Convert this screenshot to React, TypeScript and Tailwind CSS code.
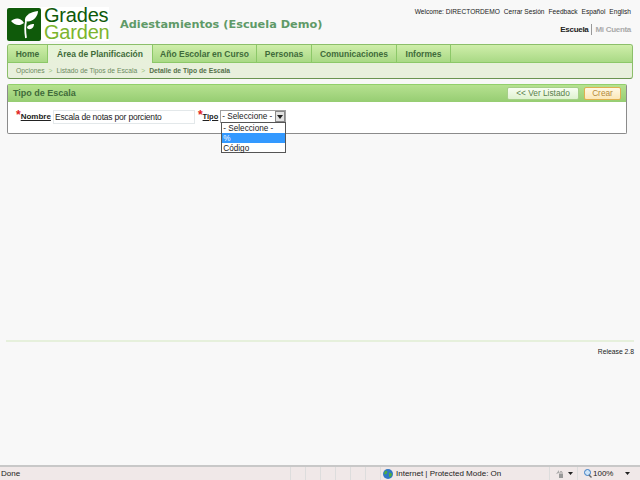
import { FunctionComponent } from "react";

const tabs = ["Home", "Área de Planificación", "Año Escolar en Curso", "Personas", "Comunicaciones", "Informes"];
const tabWidths = [40, 105, 104, 55, 85, 54];
const statusCells = [0, 1, 2, 3, 4, 5];

const Logo: FunctionComponent = () => (
	<div className="flex items-center w-[102px] h-[34px] bg-white">
		<div className="w-[34px] h-[33px] bg-[#0f5a0a] rounded-[2px] shrink-0">
			<svg viewBox="0 0 34 33" width="34" height="33">
				<path d="M19 30 C18 24 18 18 19 13" stroke="#fff" strokeWidth="1.8" fill="none" />
				<path d="M18 13 C17 8 23 4 31 3 C31 9 25 15 18 13Z" fill="#fff" />
				<path d="M17 15 C13 9 8 10 4 13 C8 18 13 18 17 15Z" fill="#fff" />
				<path d="M20 20 C20 17 24 16 27 16 C27 20 23 23 20 20Z" fill="#fff" />
			</svg>
		</div>
		<div className="ml-[3px] font-['Liberation_Sans',sans-serif] text-[20px] leading-[17px] tracking-[-0.2px]">
			<div className="text-[#0f5a0a]">Grades</div>
			<div className="text-[#7cb52e]">Garden</div>
		</div>
	</div>
);

const App: FunctionComponent = () => {
	return (
		<div className="w-[640px] h-[480px] flex flex-col bg-[#f8f8f8] overflow-hidden font-['Liberation_Sans',sans-serif]">
			<div className="h-[465px] flex flex-col shrink-0">
				{/* header */}
				<div className="h-[44px] flex shrink-0">
					<div className="pl-[7px] pt-[7px]">
						<Logo />
					</div>
					<div className="ml-[11px] pt-[17px] font-['DejaVu_Sans',sans-serif] font-bold text-[11.3px] leading-[16px] whitespace-nowrap text-[#5f9a68]">
						Adiestamientos (Escuela Demo)
					</div>
					<div className="ml-auto pr-[9px] flex flex-col items-end whitespace-nowrap">
						<div className="flex gap-[4px] pt-[7px] text-[6.6px] leading-[10px] text-[#222]">
							<span>Welcome: DIRECTORDEMO</span>
							<span>Cerrar Sesión</span>
							<span>Feedback</span>
							<span>Español</span>
							<span>English</span>
						</div>
						<div className="flex items-center pt-[7px] text-[8px] leading-[11px] font-bold tracking-[-0.3px]">
							<span className="text-[#222]">Escuela</span>
							<span className="mx-[3px] w-px h-[11px] bg-[#999]" />
							<span className="text-[#aaa]">Mi Cuenta</span>
						</div>
					</div>
				</div>

				{/* menu */}
				<div className="ml-[7px] mr-[7px] h-[35px] shrink-0 rounded-[3px] border border-[#8cbf6a] border-b-[#6a9450] bg-[#e8f0dc] overflow-hidden">
					<div className="h-[18px] flex bg-gradient-to-b from-[#cfeeaa] to-[#a9d985] border-b border-[#8cc868]">
						{tabs.map((tab, i) => (
							<div
								key={tab}
								style={{ width: tabWidths[i] }}
								className={
									i === 1
										? "shrink-0 -mb-px text-center text-[8.5px] leading-[18px] font-bold text-[#3f6b3a] bg-gradient-to-b from-[#e6f5d6] to-[#e8f0dc] border-r border-[#8cc868]"
										: "shrink-0 text-center text-[8.5px] leading-[18px] font-bold text-[#3f6b3a] border-r border-[#8cc868]"
								}
							>
								{tab}
							</div>
						))}
					</div>
					<div className="flex items-center h-[15px] pl-[8px] text-[6.75px] leading-[15px] text-[#6b8a5e] whitespace-nowrap">
						<span>Opciones</span>
						<span className="mx-[4px] text-[#9ac27e]">&gt;</span>
						<span>Listado de Tipos de Escala</span>
						<span className="mx-[4px] text-[#9ac27e]">&gt;</span>
						<span className="font-bold text-[#55704b]">Detalle de Tipo de Escala</span>
					</div>
				</div>

				{/* panel */}
				<div className="ml-[7px] mr-[13px] mt-[5px] h-[50px] shrink-0 rounded-[2px] border border-[#8b8b8b] border-t-[#92d06c] bg-white">
					<div className="h-[17px] flex items-center justify-between pl-[5px] pr-[5px] bg-gradient-to-b from-[#b6e190] to-[#96cd72]">
						<span className="text-[9px] font-bold text-[#3f6b3a]">Tipo de Escala</span>
						<div className="flex gap-[5px]">
							<button className="w-[72px] h-[13px] rounded-[2px] border border-[#a6cf88] bg-gradient-to-b from-[#f8fdf2] to-[#dff2cf] text-[8.3px] leading-[11px] text-[#5a7f4b]">
								&lt;&lt; Ver Listado
							</button>
							<button className="w-[37px] h-[13px] rounded-[2px] border border-[#e0b04e] bg-gradient-to-b from-[#fff8e4] to-[#fbe7b8] text-[8.3px] leading-[11px] text-[#b58a3a]">
								Crear
							</button>
						</div>
					</div>
					<div className="flex items-start pl-[8px] pt-[8px]">
						<span className="text-[12px] leading-[10px] font-bold text-[#e02020]">*</span>
						<span className="text-[8px] leading-[14px] font-bold underline text-[#222]">Nombre</span>
						<div className="ml-[2px] w-[142px] h-[14px] border border-[#e3e8ea] pl-[1px] text-[8.5px] leading-[12px] tracking-[-0.2px] text-[#222] whitespace-nowrap">
							Escala de notas por porciento
						</div>
						<span className="ml-[3px] text-[12px] leading-[10px] font-bold text-[#e02020]">*</span>
						<span className="text-[7.5px] leading-[14px] font-bold underline text-[#222]">Tipo</span>
						<div className="relative ml-[2px] w-[66px] h-[13px] border border-[#a0a0a0] flex items-center">
							<span className="pl-[1px] text-[8.2px] leading-[11px] text-[#222] whitespace-nowrap">- Seleccione -</span>
							<span className="absolute right-0 top-0 w-[10px] h-[11px] border border-[#888] bg-[#e2e2e2] flex items-center justify-center">
								<svg width="6" height="4" viewBox="0 0 6 4">
									<path d="M0 0H6L3 4Z" fill="#222" />
								</svg>
							</span>
							<div className="absolute left-[0px] top-[11px] z-10 w-[65px] h-[31px] border border-[#555] bg-white text-[8.2px] leading-[12px] text-[#222]">
								<div className="pl-[1px] h-[10px]">- Seleccione -</div>
								<div className="pl-[1px] h-[10px] bg-[#3399ff] text-white">%</div>
								<div className="pl-[1px] h-[10px]">Código</div>
							</div>
						</div>
					</div>
				</div>

				{/* footer */}
				<div className="ml-[6px] mr-[6px] mt-[206px] h-[2px] shrink-0 bg-[#e6f0dc]" />
				<div className="mr-[6px] mt-[5px] text-right text-[6.8px] leading-[10px] text-[#222]">Release 2.8</div>
			</div>

			{/* browser status bar */}
			<div className="h-[15px] shrink-0 flex items-center border-t-2 border-[#c8c8c8] bg-[#f0e8e8] text-[8px] text-[#222]">
				<span className="w-[290px] pl-[1px] shrink-0">Done</span>
				{statusCells.map((cell) => (
					<span key={cell} className="w-[15px] h-full shrink-0 border-l border-[#ddd]" />
				))}
				<div className="w-[169px] h-full shrink-0 flex items-center border-l border-[#ddd] pl-[2px]">
					<svg width="10" height="10" viewBox="0 0 10 10">
						<circle cx="5" cy="5" r="5" fill="#2f78c4" />
						<path d="M2 2 C4 1 5 3 4 4 C3 6 2 5 1 5Z M6 4 C8 3 9 5 9 6 C8 8 6 9 6 7Z" fill="#4fae3f" />
					</svg>
					<span className="ml-[3px] whitespace-nowrap">Internet | Protected Mode: On</span>
				</div>
				<div className="w-[28px] h-full shrink-0 flex items-center border-l border-[#ddd] pl-[5px] gap-[4px]">
					<svg width="9" height="10" viewBox="0 0 9 10">
						<path d="M1 5 L4 1 L4 4Z" fill="#aaa" />
						<rect x="4" y="5" width="4" height="4" fill="#999" />
						<path d="M5 5V3.5A1 1 0 0 1 7 3.5V5" stroke="#999" fill="none" />
					</svg>
					<svg width="5" height="3" viewBox="0 0 5 3"><path d="M0 0H5L2.5 3Z" fill="#222" /></svg>
				</div>
				<div className="flex-1 h-full flex items-center border-l border-[#ddd] pl-[6px]">
					<svg width="8" height="9" viewBox="0 0 8 9">
						<circle cx="3.5" cy="3.5" r="3" fill="#cfe4f7" stroke="#3b7cc4" />
						<path d="M5 6L7.5 8.5" stroke="#666" strokeWidth="1.4" />
					</svg>
					<span className="ml-[1px]">100%</span>
					<svg className="ml-[12px]" width="5" height="3" viewBox="0 0 5 3"><path d="M0 0H5L2.5 3Z" fill="#222" /></svg>
				</div>
			</div>
		</div>
	);
};

export default App;
